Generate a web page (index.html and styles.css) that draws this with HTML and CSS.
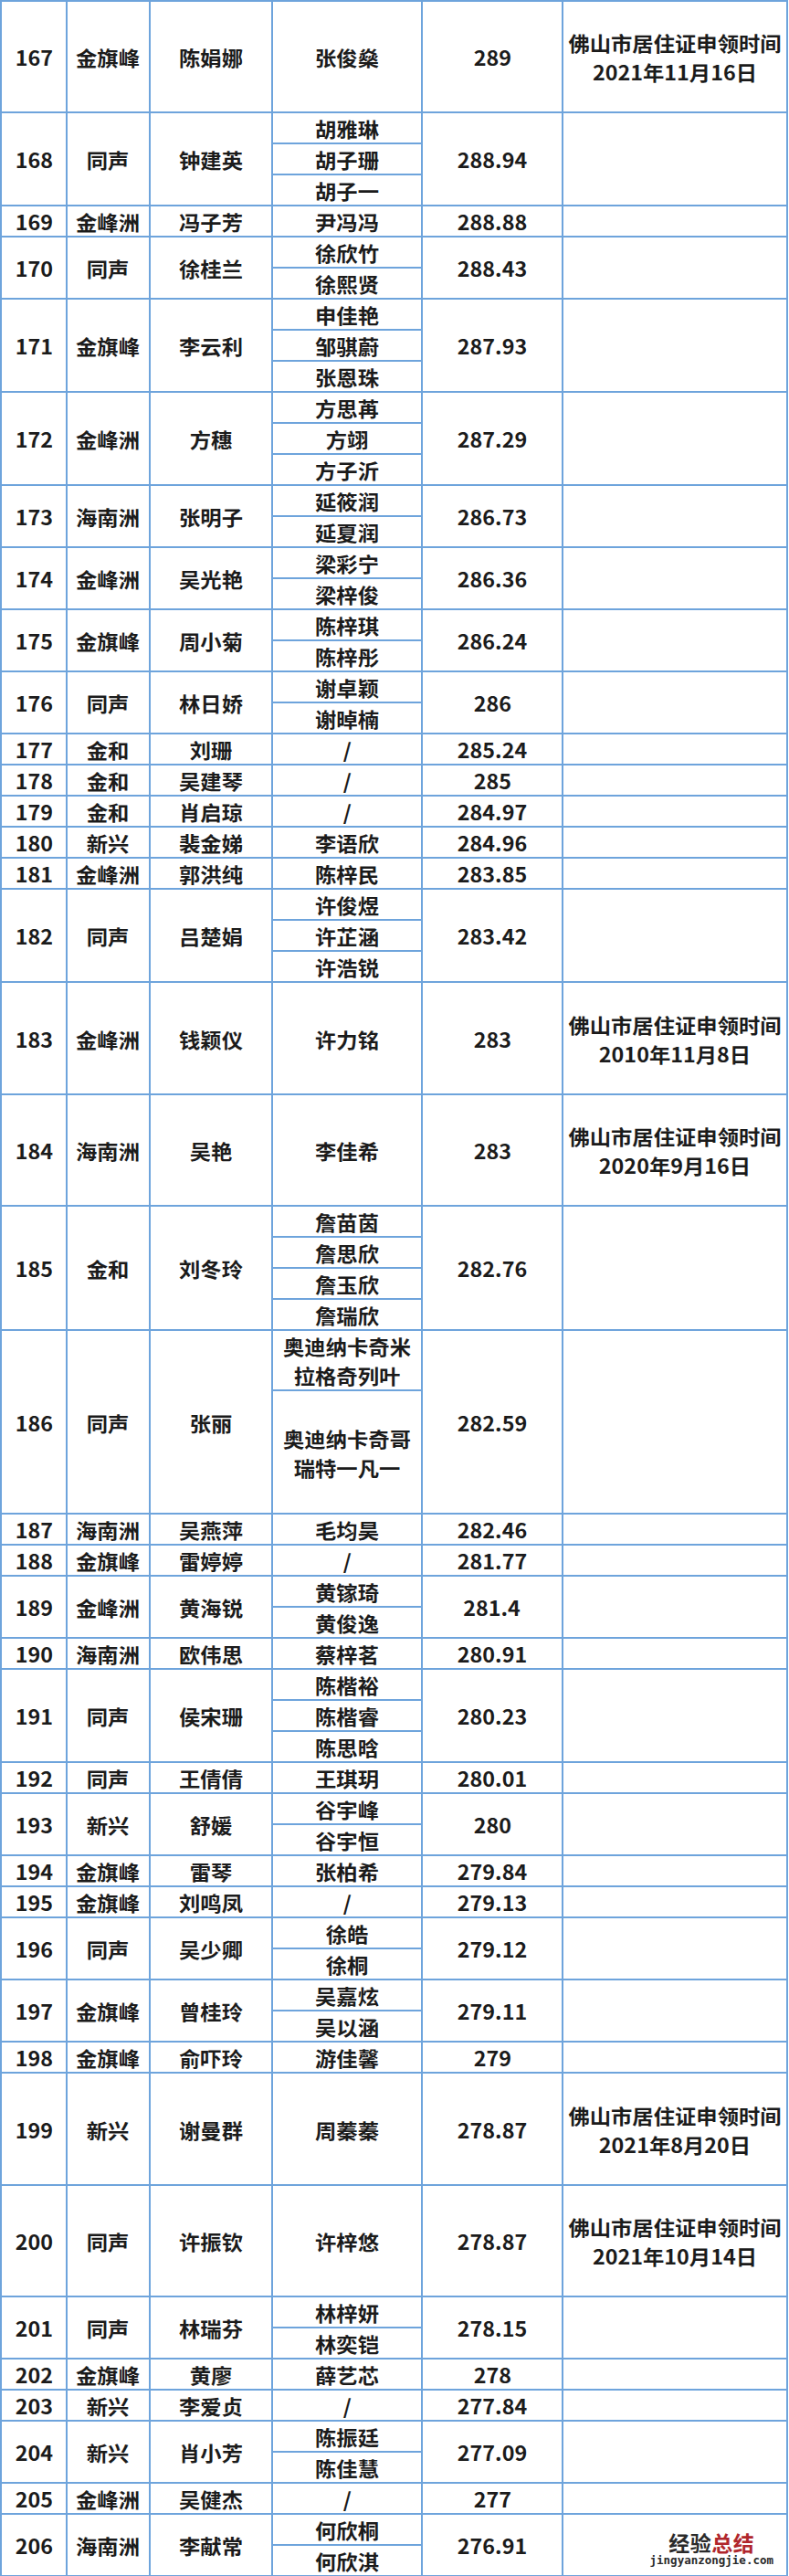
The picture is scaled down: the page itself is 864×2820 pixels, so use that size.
FILE: index.html
```html
<!DOCTYPE html>
<html lang="zh-CN">
<head>
<meta charset="utf-8">
<title>名单</title>
<link rel="stylesheet" href="styles.css">
</head>
<body>
<div class="sheet">
  <div class="row tall short">
    <div class="c"><span class="t">167</span></div><div class="c"><span class="t">金旗峰</span></div><div class="c"><span class="t">陈娟娜</span></div>
    <div class="c kids"><div class="k"><span class="t">张俊燊</span></div></div>
    <div class="c"><span class="t">289</span></div><div class="c"><span class="t">佛山市居住证申领时间<br>2021年11月16日</span></div>
  </div>
  <div class="row">
    <div class="c"><span class="t">168</span></div><div class="c"><span class="t">同声</span></div><div class="c"><span class="t">钟建英</span></div>
    <div class="c kids"><div class="k"><span class="t">胡雅琳</span></div><div class="k"><span class="t">胡子珊</span></div><div class="k"><span class="t">胡子一</span></div></div>
    <div class="c"><span class="t">288.94</span></div><div class="c"></div>
  </div>
  <div class="row">
    <div class="c"><span class="t">169</span></div><div class="c"><span class="t">金峰洲</span></div><div class="c"><span class="t">冯子芳</span></div>
    <div class="c kids"><div class="k"><span class="t">尹冯冯</span></div></div>
    <div class="c"><span class="t">288.88</span></div><div class="c"></div>
  </div>
  <div class="row">
    <div class="c"><span class="t">170</span></div><div class="c"><span class="t">同声</span></div><div class="c"><span class="t">徐桂兰</span></div>
    <div class="c kids"><div class="k"><span class="t">徐欣竹</span></div><div class="k"><span class="t">徐熙贤</span></div></div>
    <div class="c"><span class="t">288.43</span></div><div class="c"></div>
  </div>
  <div class="row">
    <div class="c"><span class="t">171</span></div><div class="c"><span class="t">金旗峰</span></div><div class="c"><span class="t">李云利</span></div>
    <div class="c kids"><div class="k"><span class="t">申佳艳</span></div><div class="k"><span class="t">邹骐蔚</span></div><div class="k"><span class="t">张恩珠</span></div></div>
    <div class="c"><span class="t">287.93</span></div><div class="c"></div>
  </div>
  <div class="row">
    <div class="c"><span class="t">172</span></div><div class="c"><span class="t">金峰洲</span></div><div class="c"><span class="t">方穗</span></div>
    <div class="c kids"><div class="k"><span class="t">方思苒</span></div><div class="k"><span class="t">方翊</span></div><div class="k"><span class="t">方子沂</span></div></div>
    <div class="c"><span class="t">287.29</span></div><div class="c"></div>
  </div>
  <div class="row">
    <div class="c"><span class="t">173</span></div><div class="c"><span class="t">海南洲</span></div><div class="c"><span class="t">张明子</span></div>
    <div class="c kids"><div class="k"><span class="t">延筱润</span></div><div class="k"><span class="t">延夏润</span></div></div>
    <div class="c"><span class="t">286.73</span></div><div class="c"></div>
  </div>
  <div class="row">
    <div class="c"><span class="t">174</span></div><div class="c"><span class="t">金峰洲</span></div><div class="c"><span class="t">吴光艳</span></div>
    <div class="c kids"><div class="k"><span class="t">梁彩宁</span></div><div class="k"><span class="t">梁梓俊</span></div></div>
    <div class="c"><span class="t">286.36</span></div><div class="c"></div>
  </div>
  <div class="row">
    <div class="c"><span class="t">175</span></div><div class="c"><span class="t">金旗峰</span></div><div class="c"><span class="t">周小菊</span></div>
    <div class="c kids"><div class="k"><span class="t">陈梓琪</span></div><div class="k"><span class="t">陈梓彤</span></div></div>
    <div class="c"><span class="t">286.24</span></div><div class="c"></div>
  </div>
  <div class="row">
    <div class="c"><span class="t">176</span></div><div class="c"><span class="t">同声</span></div><div class="c"><span class="t">林日娇</span></div>
    <div class="c kids"><div class="k"><span class="t">谢卓颖</span></div><div class="k"><span class="t">谢晫楠</span></div></div>
    <div class="c"><span class="t">286</span></div><div class="c"></div>
  </div>
  <div class="row">
    <div class="c"><span class="t">177</span></div><div class="c"><span class="t">金和</span></div><div class="c"><span class="t">刘珊</span></div>
    <div class="c kids"><div class="k"><span class="t">/</span></div></div>
    <div class="c"><span class="t">285.24</span></div><div class="c"></div>
  </div>
  <div class="row">
    <div class="c"><span class="t">178</span></div><div class="c"><span class="t">金和</span></div><div class="c"><span class="t">吴建琴</span></div>
    <div class="c kids"><div class="k"><span class="t">/</span></div></div>
    <div class="c"><span class="t">285</span></div><div class="c"></div>
  </div>
  <div class="row">
    <div class="c"><span class="t">179</span></div><div class="c"><span class="t">金和</span></div><div class="c"><span class="t">肖启琼</span></div>
    <div class="c kids"><div class="k"><span class="t">/</span></div></div>
    <div class="c"><span class="t">284.97</span></div><div class="c"></div>
  </div>
  <div class="row">
    <div class="c"><span class="t">180</span></div><div class="c"><span class="t">新兴</span></div><div class="c"><span class="t">裴金娣</span></div>
    <div class="c kids"><div class="k"><span class="t">李语欣</span></div></div>
    <div class="c"><span class="t">284.96</span></div><div class="c"></div>
  </div>
  <div class="row">
    <div class="c"><span class="t">181</span></div><div class="c"><span class="t">金峰洲</span></div><div class="c"><span class="t">郭洪纯</span></div>
    <div class="c kids"><div class="k"><span class="t">陈梓民</span></div></div>
    <div class="c"><span class="t">283.85</span></div><div class="c"></div>
  </div>
  <div class="row">
    <div class="c"><span class="t">182</span></div><div class="c"><span class="t">同声</span></div><div class="c"><span class="t">吕楚娟</span></div>
    <div class="c kids"><div class="k"><span class="t">许俊煜</span></div><div class="k"><span class="t">许芷涵</span></div><div class="k"><span class="t">许浩锐</span></div></div>
    <div class="c"><span class="t">283.42</span></div><div class="c"></div>
  </div>
  <div class="row tall">
    <div class="c"><span class="t">183</span></div><div class="c"><span class="t">金峰洲</span></div><div class="c"><span class="t">钱颖仪</span></div>
    <div class="c kids"><div class="k"><span class="t">许力铭</span></div></div>
    <div class="c"><span class="t">283</span></div><div class="c"><span class="t">佛山市居住证申领时间<br>2010年11月8日</span></div>
  </div>
  <div class="row tall short">
    <div class="c"><span class="t">184</span></div><div class="c"><span class="t">海南洲</span></div><div class="c"><span class="t">吴艳</span></div>
    <div class="c kids"><div class="k"><span class="t">李佳希</span></div></div>
    <div class="c"><span class="t">283</span></div><div class="c"><span class="t">佛山市居住证申领时间<br>2020年9月16日</span></div>
  </div>
  <div class="row">
    <div class="c"><span class="t">185</span></div><div class="c"><span class="t">金和</span></div><div class="c"><span class="t">刘冬玲</span></div>
    <div class="c kids"><div class="k"><span class="t">詹苗茵</span></div><div class="k"><span class="t">詹思欣</span></div><div class="k"><span class="t">詹玉欣</span></div><div class="k"><span class="t">詹瑞欣</span></div></div>
    <div class="c"><span class="t">282.76</span></div><div class="c"></div>
  </div>
  <div class="row">
    <div class="c"><span class="t">186</span></div><div class="c"><span class="t">同声</span></div><div class="c"><span class="t">张丽</span></div>
    <div class="c kids"><div class="k ka"><span class="t">奥迪纳卡奇米<br>拉格奇列叶</span></div><div class="k kb"><span class="t">奥迪纳卡奇哥<br>瑞特一凡一</span></div></div>
    <div class="c"><span class="t">282.59</span></div><div class="c"></div>
  </div>
  <div class="row">
    <div class="c"><span class="t">187</span></div><div class="c"><span class="t">海南洲</span></div><div class="c"><span class="t">吴燕萍</span></div>
    <div class="c kids"><div class="k"><span class="t">毛均昊</span></div></div>
    <div class="c"><span class="t">282.46</span></div><div class="c"></div>
  </div>
  <div class="row">
    <div class="c"><span class="t">188</span></div><div class="c"><span class="t">金旗峰</span></div><div class="c"><span class="t">雷婷婷</span></div>
    <div class="c kids"><div class="k"><span class="t">/</span></div></div>
    <div class="c"><span class="t">281.77</span></div><div class="c"></div>
  </div>
  <div class="row">
    <div class="c"><span class="t">189</span></div><div class="c"><span class="t">金峰洲</span></div><div class="c"><span class="t">黄海锐</span></div>
    <div class="c kids"><div class="k"><span class="t">黄镓琦</span></div><div class="k"><span class="t">黄俊逸</span></div></div>
    <div class="c"><span class="t">281.4</span></div><div class="c"></div>
  </div>
  <div class="row">
    <div class="c"><span class="t">190</span></div><div class="c"><span class="t">海南洲</span></div><div class="c"><span class="t">欧伟思</span></div>
    <div class="c kids"><div class="k"><span class="t">蔡梓茗</span></div></div>
    <div class="c"><span class="t">280.91</span></div><div class="c"></div>
  </div>
  <div class="row">
    <div class="c"><span class="t">191</span></div><div class="c"><span class="t">同声</span></div><div class="c"><span class="t">侯宋珊</span></div>
    <div class="c kids"><div class="k"><span class="t">陈楷裕</span></div><div class="k"><span class="t">陈楷睿</span></div><div class="k"><span class="t">陈思晗</span></div></div>
    <div class="c"><span class="t">280.23</span></div><div class="c"></div>
  </div>
  <div class="row">
    <div class="c"><span class="t">192</span></div><div class="c"><span class="t">同声</span></div><div class="c"><span class="t">王倩倩</span></div>
    <div class="c kids"><div class="k"><span class="t">王琪玥</span></div></div>
    <div class="c"><span class="t">280.01</span></div><div class="c"></div>
  </div>
  <div class="row">
    <div class="c"><span class="t">193</span></div><div class="c"><span class="t">新兴</span></div><div class="c"><span class="t">舒媛</span></div>
    <div class="c kids"><div class="k"><span class="t">谷宇峰</span></div><div class="k"><span class="t">谷宇恒</span></div></div>
    <div class="c"><span class="t">280</span></div><div class="c"></div>
  </div>
  <div class="row">
    <div class="c"><span class="t">194</span></div><div class="c"><span class="t">金旗峰</span></div><div class="c"><span class="t">雷琴</span></div>
    <div class="c kids"><div class="k"><span class="t">张柏希</span></div></div>
    <div class="c"><span class="t">279.84</span></div><div class="c"></div>
  </div>
  <div class="row">
    <div class="c"><span class="t">195</span></div><div class="c"><span class="t">金旗峰</span></div><div class="c"><span class="t">刘鸣凤</span></div>
    <div class="c kids"><div class="k"><span class="t">/</span></div></div>
    <div class="c"><span class="t">279.13</span></div><div class="c"></div>
  </div>
  <div class="row">
    <div class="c"><span class="t">196</span></div><div class="c"><span class="t">同声</span></div><div class="c"><span class="t">吴少卿</span></div>
    <div class="c kids"><div class="k"><span class="t">徐皓</span></div><div class="k"><span class="t">徐桐</span></div></div>
    <div class="c"><span class="t">279.12</span></div><div class="c"></div>
  </div>
  <div class="row">
    <div class="c"><span class="t">197</span></div><div class="c"><span class="t">金旗峰</span></div><div class="c"><span class="t">曾桂玲</span></div>
    <div class="c kids"><div class="k"><span class="t">吴嘉炫</span></div><div class="k"><span class="t">吴以涵</span></div></div>
    <div class="c"><span class="t">279.11</span></div><div class="c"></div>
  </div>
  <div class="row">
    <div class="c"><span class="t">198</span></div><div class="c"><span class="t">金旗峰</span></div><div class="c"><span class="t">俞吓玲</span></div>
    <div class="c kids"><div class="k"><span class="t">游佳馨</span></div></div>
    <div class="c"><span class="t">279</span></div><div class="c"></div>
  </div>
  <div class="row tall">
    <div class="c"><span class="t">199</span></div><div class="c"><span class="t">新兴</span></div><div class="c"><span class="t">谢曼群</span></div>
    <div class="c kids"><div class="k"><span class="t">周蓁蓁</span></div></div>
    <div class="c"><span class="t">278.87</span></div><div class="c"><span class="t">佛山市居住证申领时间<br>2021年8月20日</span></div>
  </div>
  <div class="row tall short">
    <div class="c"><span class="t">200</span></div><div class="c"><span class="t">同声</span></div><div class="c"><span class="t">许振钦</span></div>
    <div class="c kids"><div class="k"><span class="t">许梓悠</span></div></div>
    <div class="c"><span class="t">278.87</span></div><div class="c"><span class="t">佛山市居住证申领时间<br>2021年10月14日</span></div>
  </div>
  <div class="row">
    <div class="c"><span class="t">201</span></div><div class="c"><span class="t">同声</span></div><div class="c"><span class="t">林瑞芬</span></div>
    <div class="c kids"><div class="k"><span class="t">林梓妍</span></div><div class="k"><span class="t">林奕铠</span></div></div>
    <div class="c"><span class="t">278.15</span></div><div class="c"></div>
  </div>
  <div class="row">
    <div class="c"><span class="t">202</span></div><div class="c"><span class="t">金旗峰</span></div><div class="c"><span class="t">黄廖</span></div>
    <div class="c kids"><div class="k"><span class="t">薛艺芯</span></div></div>
    <div class="c"><span class="t">278</span></div><div class="c"></div>
  </div>
  <div class="row">
    <div class="c"><span class="t">203</span></div><div class="c"><span class="t">新兴</span></div><div class="c"><span class="t">李爱贞</span></div>
    <div class="c kids"><div class="k"><span class="t">/</span></div></div>
    <div class="c"><span class="t">277.84</span></div><div class="c"></div>
  </div>
  <div class="row">
    <div class="c"><span class="t">204</span></div><div class="c"><span class="t">新兴</span></div><div class="c"><span class="t">肖小芳</span></div>
    <div class="c kids"><div class="k"><span class="t">陈振廷</span></div><div class="k"><span class="t">陈佳慧</span></div></div>
    <div class="c"><span class="t">277.09</span></div><div class="c"></div>
  </div>
  <div class="row">
    <div class="c"><span class="t">205</span></div><div class="c"><span class="t">金峰洲</span></div><div class="c"><span class="t">吴健杰</span></div>
    <div class="c kids"><div class="k"><span class="t">/</span></div></div>
    <div class="c"><span class="t">277</span></div><div class="c"></div>
  </div>
  <div class="row">
    <div class="c"><span class="t">206</span></div><div class="c"><span class="t">海南洲</span></div><div class="c"><span class="t">李献常</span></div>
    <div class="c kids"><div class="k"><span class="t">何欣桐</span></div><div class="k"><span class="t">何欣淇</span></div></div>
    <div class="c"><span class="t">276.91</span></div>
    <div class="c wmcell">
      <div class="wm"><div class="wm-cn">经验<span class="wm-red">总结</span></div><div class="wm-en">jingyanzongjie.com</div></div>
    </div>
  </div>
</div>
</body>
</html>
```

FILE: styles.css
```css
* { box-sizing: border-box; }

body {
  margin: 0;
  background: #ffffff;
  font-family: "Noto Sans CJK SC", "Noto Sans", sans-serif;
  color: #1b1b1b;
}

.sheet {
  width: 863px;
  border-left: 2px solid #6ea4dc;
  border-top: 2px solid #6ea4dc;
}

.row {
  display: grid;
  grid-template-columns: 72px 91px 134px 164px 154px 246px;
  border-bottom: 2px solid #6ea4dc;
}

.row.tall { height: 123px; }
.row.tall.short { height: 122px; }

.c {
  border-right: 2px solid #6ea4dc;
  display: flex;
  align-items: center;
  justify-content: center;
  text-align: center;
  font-size: 22px;
  line-height: 32px;
  font-weight: 700;
}

.t {
  display: inline-block;
  transform: scaleX(1.06);
}

.kids {
  flex-direction: column;
  align-items: stretch;
  justify-content: flex-start;
}

.k {
  flex: 1 0 34px;
  border-bottom: 2px solid #6ea4dc;
  display: flex;
  align-items: center;
  justify-content: center;
}

.k:last-child {
  flex-basis: 32px;
  border-bottom: 0;
}

.k.ka { flex: 0 0 65px; }
.k.kb { flex: 0 0 133px; }

.wmcell { position: relative; }

.wm {
  position: absolute;
  right: 14px;
  bottom: 9px;
  text-align: center;
  font-weight: 700;
}

.wm-cn {
  font-size: 23px;
  line-height: 26px;
  color: #2a2a2a;
  letter-spacing: 0.5px;
}

.wm-red { color: #b0262c; }

.wm-en {
  font-family: "DejaVu Sans Mono", "Liberation Mono", monospace;
  font-size: 12.5px;
  line-height: 14px;
  color: #2a2a2a;
  font-weight: 700;
}
```
